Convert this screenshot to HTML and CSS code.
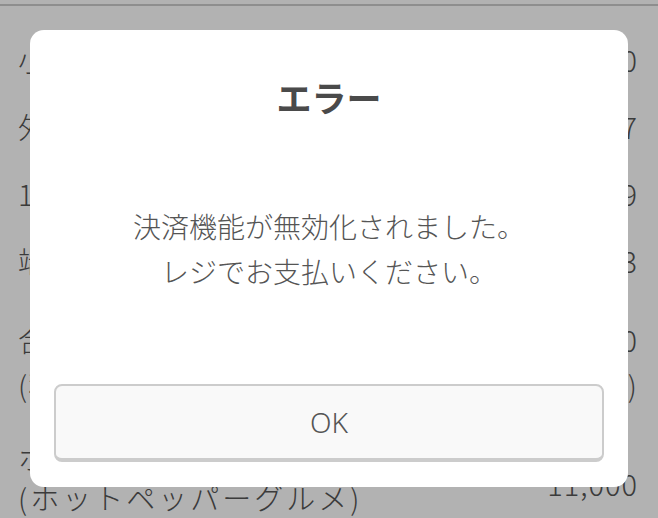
FILE: index.html
```html
<!DOCTYPE html>
<html lang="ja">
<head>
<meta charset="UTF-8">
<meta name="viewport" content="width=device-width, initial-scale=1.0">
<title>お会計</title>
<link rel="stylesheet" href="styles.css">
</head>
<body>
<div class="header"></div>
<div class="list">
    <div class="row">
        <span>小計</span>
        <span>¥10,000</span>
    </div>
    <div class="row">
        <span>外税</span>
        <span>¥997</span>
    </div>
    <div class="row">
        <span>10%対象</span>
        <span>¥9,969</span>
    </div>
    <div class="row">
        <span>端数調整</span>
        <span>¥3</span>
    </div>
    <div class="row total">
        <span>合計<br>(税込)</span>
        <span class="right">¥11,000<br>(内税 ¥1,000)</span>
    </div>
    <div class="row last">
        <span class="wide">ホットペッパーグルメ<br>(ホットペッパーグルメ)</span>
        <span class="amount">11,000</span>
    </div>
</div>

<div class="overlay"></div>

<div class="modal">
    <h2 class="modal-title">エラー</h2>
    <p class="modal-text">決済機能が無効化されました。<br>レジでお支払いください。</p>
    <button type="button" class="btn-ok">OK</button>
</div>
</body>
</html>
```

FILE: styles.css
```css
html, body {
    margin: 0;
    padding: 0;
}
body {
    width: 658px;
    height: 518px;
    overflow: hidden;
    background-color: #fff;
    color: #555;
    font-family: "Noto Sans CJK JP", "Noto Sans", sans-serif;
}
.header {
    height: 4px;
    border-bottom: 2px solid #ccc;
}
.list {
    padding-top: 20px;
}
.row {
    display: flex;
    justify-content: space-between;
    align-items: center;
    padding: 11px 20px 11px 18px;
    font-size: 29px;
    font-weight: 300;
    line-height: 45px;
    letter-spacing: 1px;
    white-space: nowrap;
}
.row .right {
    text-align: right;
}
.total {
    margin-top: 12px;
}
.last {
    margin-top: 3px;
    padding-top: 16px;
    line-height: 40px;
}
.last .wide {
    letter-spacing: 3px;
}
.last .amount {
    padding-top: 12px;
}
.overlay {
    position: fixed;
    inset: 0;
    background-color: rgba(0, 0, 0, 0.3);
}
.modal {
    position: fixed;
    left: 30px;
    top: 30px;
    width: 598px;
    height: 457px;
    box-sizing: border-box;
    padding: 43px 24px 25px 24px;
    background-color: #fff;
    border-radius: 14px;
    display: flex;
    flex-direction: column;
    align-items: center;
}
.modal-title {
    margin: 0;
    font-size: 35px;
    line-height: 48px;
    font-weight: bold;
    color: #4a4a4a;
}
.modal-text {
    margin: 83px 0 0 0;
    font-size: 28px;
    font-weight: 300;
    line-height: 45px;
    text-align: center;
    color: #555;
}
.btn-ok {
    margin-top: auto;
    width: 100%;
    height: 78px;
    box-sizing: border-box;
    background-color: #f9f9f9;
    border: 2px solid #ccc;
    border-bottom-width: 4px;
    border-radius: 8px;
    font-family: "Noto Sans", sans-serif;
    font-size: 28px;
    font-weight: 300;
    color: #555;
    cursor: pointer;
}
```
